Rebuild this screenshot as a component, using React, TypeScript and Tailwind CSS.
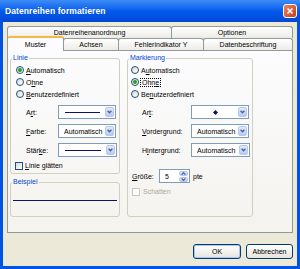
import React from "react";

function Chevron() {
  return (
    <svg width="5" height="4" viewBox="0 0 5 4">
      <path d="M0.6 0.8 L2.5 2.8 L4.4 0.8" stroke="#4D6185" strokeWidth="1.3" fill="none" />
    </svg>
  );
}

function ComboButton() {
  return (
    <div className="w-[9px] h-full rounded-[2px] border border-[#B6C8F0] bg-gradient-to-b from-[#E1EAFE] to-[#B4CAF6] flex items-center justify-center shrink-0">
      <Chevron />
    </div>
  );
}

function Combo({ className, children }: { className: string; children?: React.ReactNode }) {
  return (
    <div className={`h-[14px] bg-white border border-[#7F9DB9] flex p-px ${className}`}>
      <div className="flex-1 flex items-center min-w-0">{children}</div>
      <ComboButton />
    </div>
  );
}

function Radio({ checked }: { checked?: boolean }) {
  return (
    <span className="w-[8px] h-[8px] rounded-full border border-[#1C5180] bg-gradient-to-br from-[#DCDBD4] to-white flex items-center justify-center shrink-0">
      {checked && <span className="w-[4px] h-[4px] rounded-full bg-[#21A121]" />}
    </span>
  );
}

function Check({ disabled }: { disabled?: boolean }) {
  return (
    <span
      className={
        disabled
          ? "w-[8px] h-[8px] border border-[#CAC8BB] bg-white shrink-0"
          : "w-[8px] h-[8px] border border-[#1C5180] bg-gradient-to-br from-[#DCDBD4] to-white shrink-0"
      }
    />
  );
}

function RadioRow({ checked, children }: { checked?: boolean; children: React.ReactNode }) {
  return (
    <div className="h-[12px] flex items-center gap-[2px]">
      <Radio checked={checked} />
      <span>{children}</span>
    </div>
  );
}

function Tab({ className, children }: { className: string; children: React.ReactNode }) {
  return (
    <div
      className={`h-full border border-b-0 border-[#919B9C] rounded-t-[3px] bg-gradient-to-b from-white to-[#ECEBE6] flex items-center justify-center ${className}`}
    >
      {children}
    </div>
  );
}

function Button({ className, children }: { className: string; children: React.ReactNode }) {
  return (
    <div
      className={`h-[15px] rounded-[3px] border border-[#003C74] bg-gradient-to-b from-white to-[#E6E4DC] flex items-center justify-center ${className}`}
    >
      {children}
    </div>
  );
}

function NavyLine() {
  return <div className="mx-[5px] flex-1 h-px bg-[#0A1463]" />;
}

export default function App() {
  return (
    <div className="w-[300px] h-[269px] flex flex-col bg-[#0054E3] font-['Liberation_Sans',Arial,sans-serif] text-[7px] leading-none text-black">
      {/* title bar */}
      <div className="h-[22px] shrink-0 flex items-center justify-between pl-[5px] pr-[3px] bg-gradient-to-b from-[#3D8DF6] via-[#0459EC] to-[#0047D6]">
        <span className="text-white font-bold text-[8.5px] tracking-[0.1px]">Datenreihen formatieren</span>
        <div className="w-[14px] h-[14px] rounded-[3px] border border-white bg-gradient-to-br from-[#E9865F] to-[#C7381A] flex items-center justify-center">
          <svg width="8" height="8" viewBox="0 0 8 8">
            <path d="M1.5 1.5 L6.5 6.5 M6.5 1.5 L1.5 6.5" stroke="white" strokeWidth="1.6" />
          </svg>
        </div>
      </div>

      {/* dialog body */}
      <div className="flex-1 mx-[3px] mb-[3px] bg-[#ECE9D8] px-[4px] pt-[4px] flex flex-col">
        {/* back tab row */}
        <div className="flex h-[12px]">
          <Tab className="w-[165px]">Datenreihenanordnung</Tab>
          <Tab className="w-[122px] -ml-px">Optionen</Tab>
        </div>
        {/* front tab row */}
        <div className="flex h-[12px] items-end">
          <div className="relative z-10 w-[57px] h-[15px] -mb-px border-x border-t-2 border-[#919B9C] border-t-[#F6B746] rounded-t-[3px] bg-[#FCFCFE] flex items-center justify-center pb-[1px]">
            Muster
          </div>
          <Tab className="w-[56px] -ml-px">Achsen</Tab>
          <Tab className="w-[86px] -ml-px">Fehlerindikator Y</Tab>
          <Tab className="w-[90px] -ml-px">Datenbeschriftung</Tab>
        </div>

        {/* panel */}
        <div className="h-[183px] border border-[#919B9C] bg-gradient-to-b from-[#FCFCFE] to-[#F4F3EE] pl-[2px] pt-[3px] flex items-start">
          <div className="flex flex-col w-[110px]">
            <fieldset className="h-[120px] border border-[#D0D0BF] rounded-[3px]">
              <legend className="ml-[1px] px-[1px] leading-[8px] text-[#0046D5]">Linie</legend>
              <div className="pl-[5px] pt-[2px] flex flex-col">
                <RadioRow checked>
                  <u>A</u>utomatisch
                </RadioRow>
                <RadioRow>
                  O<u>h</u>ne
                </RadioRow>
                <RadioRow>
                  <u>B</u>enutzerdefiniert
                </RadioRow>
                <div className="mt-[5px] pl-[10px] flex flex-col gap-[5px]">
                  <div className="flex items-center">
                    <span className="w-[32px]">
                      A<u>r</u>t:
                    </span>
                    <Combo className="w-[58px]">
                      <NavyLine />
                    </Combo>
                  </div>
                  <div className="flex items-center">
                    <span className="w-[32px]">
                      <u>F</u>arbe:
                    </span>
                    <Combo className="w-[58px]">
                      <span className="pl-[4px]">Automatisch</span>
                    </Combo>
                  </div>
                  <div className="flex items-center">
                    <span className="w-[32px]">
                      Stär<u>k</u>e:
                    </span>
                    <Combo className="w-[59px]">
                      <NavyLine />
                    </Combo>
                  </div>
                </div>
                <div className="mt-[3px] h-[11px] -ml-px flex items-center gap-[2px]">
                  <Check />
                  <span>
                    <u>L</u>inie glätten
                  </span>
                </div>
              </div>
            </fieldset>

            <fieldset className="mt-[4px] h-[39px] border border-[#D0D0BF] rounded-[3px]">
              <legend className="ml-[1px] px-[1px] leading-[8px] text-[#0046D5]">Beispiel</legend>
              <div className="mx-[2px] mt-[14px] h-px bg-[#0A1463]" />
            </fieldset>
          </div>

          <fieldset className="ml-[7px] w-[126px] h-[163px] border border-[#D0D0BF] rounded-[3px]">
            <legend className="ml-[1px] px-[1px] leading-[8px] text-[#0046D5]">Markierung</legend>
            <div className="pl-[3px] pt-[2px] flex flex-col">
              <RadioRow>
                A<u>u</u>tomatisch
              </RadioRow>
              <RadioRow checked>
                <span className="outline outline-1 outline-dotted outline-black px-[1px]">
                  Ohn<u>e</u>
                </span>
              </RadioRow>
              <RadioRow>
                Be<u>n</u>utzerdefiniert
              </RadioRow>
              <div className="mt-[5px] pl-[11px] flex flex-col gap-[5px]">
                <div className="flex items-center">
                  <span className="w-[49px]">
                    Ar<u>t</u>:
                  </span>
                  <Combo className="w-[58px]">
                    <div className="flex-1 flex justify-center">
                      <svg width="5" height="5" viewBox="0 0 5 5">
                        <path d="M2.5 0 L5 2.5 L2.5 5 L0 2.5 Z" fill="#0A1463" />
                      </svg>
                    </div>
                  </Combo>
                </div>
                <div className="flex items-center">
                  <span className="w-[49px]">
                    <u>V</u>ordergrund:
                  </span>
                  <Combo className="w-[58px]">
                    <span className="pl-[4px]">Automatisch</span>
                  </Combo>
                </div>
                <div className="flex items-center">
                  <span className="w-[49px]">
                    H<u>i</u>ntergrund:
                  </span>
                  <Combo className="w-[59px]">
                    <span className="pl-[4px]">Automatisch</span>
                  </Combo>
                </div>
              </div>
              <div className="mt-[12px] pl-[1px] flex items-center">
                <span className="w-[27px]">
                  <u>G</u>röße:
                </span>
                <div className="w-[31px] h-[14px] bg-white border border-[#7F9DB9] flex p-px">
                  <span className="flex-1 flex items-center pl-[4px]">5</span>
                  <div className="w-[9px] flex flex-col gap-px">
                    <div className="flex-1 rounded-[2px] border border-[#B6C8F0] bg-gradient-to-b from-[#E1EAFE] to-[#B4CAF6] flex items-center justify-center">
                      <svg width="5" height="3" viewBox="0 0 5 3">
                        <path d="M0.6 2.6 L2.5 0.7 L4.4 2.6" stroke="#4D6185" strokeWidth="1.2" fill="none" />
                      </svg>
                    </div>
                    <div className="flex-1 rounded-[2px] border border-[#B6C8F0] bg-gradient-to-b from-[#E1EAFE] to-[#B4CAF6] flex items-center justify-center">
                      <svg width="5" height="3" viewBox="0 0 5 3">
                        <path d="M0.6 0.4 L2.5 2.3 L4.4 0.4" stroke="#4D6185" strokeWidth="1.2" fill="none" />
                      </svg>
                    </div>
                  </div>
                </div>
                <span className="ml-[3px]">pte</span>
              </div>
              <div className="mt-[3px] h-[11px] pl-[1px] flex items-center gap-[3px] text-[#ACA899]">
                <Check disabled />
                <span>Schatten</span>
              </div>
            </div>
          </fieldset>
        </div>

        {/* buttons */}
        <div className="mt-[11px] flex justify-end gap-[5px]">
          <Button className="w-[48px] shadow-[inset_0_0_0_1px_#A9C6F5]">OK</Button>
          <Button className="w-[47px]">Abbrechen</Button>
        </div>
      </div>
    </div>
  );
}
